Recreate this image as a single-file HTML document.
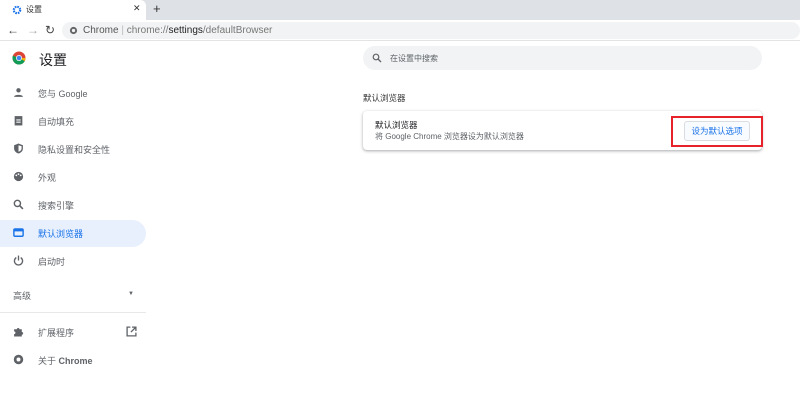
<!DOCTYPE html>
<html><head><meta charset="utf-8"><style>
*{margin:0;padding:0;box-sizing:border-box}
body{width:800px;height:404px;background:#fff;font-family:"Liberation Sans","Noto Sans CJK SC",sans-serif;position:relative;overflow:hidden;color:#202124}
.abs{position:absolute}
.tabbar{left:0;top:0;width:800px;height:20px;background:#dee1e6}
.tab{left:0;top:0;width:146px;height:20px;background:#fff;border-radius:0 6px 0 0}
.toolbar{left:0;top:20px;width:800px;height:21px;background:#fff;border-bottom:1px solid #e3e3e3}
.omni{left:62px;top:22px;width:738px;height:17px;background:#f1f3f4;border-radius:9px}
.nav{left:0;width:146px;height:28px;font-size:9px;color:#5f6368}
.nav span{position:absolute;left:38px;top:8px}
.nav svg{position:absolute;left:13px;top:8px}
</style></head><body>
<div class="abs tabbar"></div>
<div class="abs tab"></div>
<svg class="abs" style="left:12px;top:5px" width="10" height="10" viewBox="0 0 10 10"><circle cx="5" cy="5" r="3.2" fill="none" stroke="#1a73e8" stroke-width="2.2" stroke-dasharray="1.6 0.9"/><circle cx="5" cy="5" r="1" fill="#fff"/></svg>
<div class="abs" style="left:26px;top:4px;font-size:8px;color:#333">设置</div>
<div class="abs" style="left:133px;top:3px;font-size:9px;color:#333">✕</div>
<div class="abs" style="left:153px;top:1px;font-size:13px;color:#333">+</div>
<div class="abs toolbar"></div>
<div class="abs" style="left:7px;top:23px;font-size:12px;color:#444">←</div>
<div class="abs" style="left:27px;top:23px;font-size:12px;color:#aaa">→</div>
<div class="abs" style="left:45px;top:23px;font-size:12px;color:#444">↻</div>
<div class="abs omni"></div>
<svg class="abs" style="left:69px;top:26px" width="9" height="9" viewBox="0 0 10 10"><circle cx="5" cy="5" r="4" fill="#666"/><circle cx="5" cy="5" r="1.8" fill="#f1f3f4"/></svg>
<div class="abs" style="left:83px;top:25px;font-size:10px;color:#555">Chrome <span style="color:#bbb">|</span> <span style="color:#777">chrome://</span><span style="color:#222">settings</span><span style="color:#777">/defaultBrowser</span></div>

<svg class="abs" style="left:12px;top:51px" width="14" height="14" viewBox="0 0 14 14"><circle cx="7" cy="7" r="6.5" fill="#db4437"/><path d="M7 7 L1.4 10.2 A6.5 6.5 0 0 1 0.9 4.6Z" fill="#0f9d58"/><path d="M7 7 L12.8 10 A6.5 6.5 0 0 1 1.4 10.2Z" fill="#0f9d58"/><path d="M7 7 L13.5 7 A6.5 6.5 0 0 1 12.8 10Z" fill="#f4b400"/><circle cx="7" cy="7" r="3" fill="#fff"/><circle cx="7" cy="7" r="2.3" fill="#4285f4"/></svg>
<div class="abs" style="left:39px;top:50px;font-size:14px;color:#202124">设置</div>

<div class="abs nav" style="top:79px"><svg width="11" height="11" viewBox="0 0 10 10"><circle cx="5" cy="3" r="2" fill="#5f6368"/><path d="M1 9c0-2.5 8-2.5 8 0z" fill="#5f6368"/></svg><span>您与 Google</span></div>
<div class="abs nav" style="top:107px"><svg width="11" height="11" viewBox="0 0 10 10"><rect x="1.5" y="1" width="7" height="8.5" fill="#5f6368"/><rect x="3" y="4" width="4" height="1" fill="#fff"/><rect x="3" y="6" width="4" height="1" fill="#fff"/></svg><span>自动填充</span></div>
<div class="abs nav" style="top:135px"><svg width="11" height="11" viewBox="0 0 10 10"><path d="M5 0.5L9 2v3c0 2.5-2 4-4 4.5C3 9 1 7.5 1 5V2z" fill="#5f6368"/><path d="M5 2v6c1.5-.5 2.8-1.5 2.8-3.2V2.9z" fill="#fff"/></svg><span>隐私设置和安全性</span></div>
<div class="abs nav" style="top:163px"><svg width="11" height="11" viewBox="0 0 10 10"><circle cx="5" cy="5" r="4.2" fill="#5f6368"/><circle cx="3" cy="4" r=".8" fill="#fff"/><circle cx="5" cy="2.8" r=".8" fill="#fff"/><circle cx="7" cy="4" r=".8" fill="#fff"/></svg><span>外观</span></div>
<div class="abs nav" style="top:191px"><svg width="11" height="11" viewBox="0 0 10 10"><circle cx="4" cy="4" r="2.8" fill="none" stroke="#5f6368" stroke-width="1.3"/><path d="M6 6l3 3" stroke="#5f6368" stroke-width="1.5"/></svg><span>搜索引擎</span></div>
<div class="abs" style="left:0;top:220px;width:146px;height:27px;background:#e8f0fe;border-radius:0 14px 14px 0"></div>
<div class="abs nav" style="top:219px;color:#1a73e8"><svg width="11" height="11" viewBox="0 0 10 10"><rect x="0.8" y="1.8" width="8.4" height="6.6" rx="1" fill="none" stroke="#1a73e8" stroke-width="1.3"/><rect x="0.8" y="1.8" width="8.4" height="2.2" fill="#1a73e8"/></svg><span>默认浏览器</span></div>
<div class="abs nav" style="top:247px"><svg width="11" height="11" viewBox="0 0 10 10"><path d="M3 2.3A3.7 3.7 0 1 0 7 2.3" fill="none" stroke="#5f6368" stroke-width="1.2"/><path d="M5 0.5v4.5" stroke="#5f6368" stroke-width="1.2"/></svg><span>启动时</span></div>
<div class="abs" style="left:13px;top:289px;font-size:9px;color:#5f6368">高级</div>
<div class="abs" style="left:128px;top:291px;font-size:6px;color:#5f6368">▼</div>
<div class="abs" style="left:0;top:312px;width:146px;height:1px;background:#e8e8e8"></div>
<div class="abs nav" style="top:318px"><svg width="11" height="11" viewBox="0 0 10 10"><path d="M1 3h2.5a1.2 1.2 0 1 1 2.4 0H8v2.5a1.2 1.2 0 1 1 0 2.4V9.5H1V7.3a1.2 1.2 0 1 0 0-2.4z" fill="#5f6368"/></svg><span>扩展程序</span></div>
<svg class="abs" style="left:126px;top:326px" width="11" height="11" viewBox="0 0 10 10"><path d="M4 1H1v8h8V6" fill="none" stroke="#5f6368" stroke-width="1.2"/><path d="M5.5 1H9v3.5M9 1L4.5 5.5" fill="none" stroke="#5f6368" stroke-width="1.2"/></svg>
<div class="abs nav" style="top:346px"><svg width="11" height="11" viewBox="0 0 10 10"><circle cx="5" cy="5" r="4.3" fill="#5f6368"/><circle cx="5" cy="5" r="1.8" fill="#fff"/></svg><span>关于 <b style="font-weight:bold">Chrome</b></span></div>

<div class="abs" style="left:363px;top:46px;width:399px;height:24px;background:#f1f3f4;border-radius:12px"></div>
<svg class="abs" style="left:372px;top:53px" width="10" height="10" viewBox="0 0 10 10"><circle cx="4" cy="4" r="2.8" fill="none" stroke="#5f6368" stroke-width="1.2"/><path d="M6 6l3 3" stroke="#5f6368" stroke-width="1.3"/></svg>
<div class="abs" style="left:390px;top:53px;font-size:8px;color:#5f6368">在设置中搜索</div>
<div class="abs" style="left:363px;top:92px;font-size:8.5px;color:#333">默认浏览器</div>
<div class="abs" style="left:363px;top:111px;width:399px;height:39px;background:#fff;border-radius:4px;box-shadow:0 1px 2px rgba(60,64,67,.3),0 1px 3px 1px rgba(60,64,67,.12)"></div>
<div class="abs" style="left:375px;top:119px;font-size:8.5px;color:#202124">默认浏览器</div>
<div class="abs" style="left:375px;top:131px;font-size:8px;color:#5f6368">将 Google Chrome 浏览器设为默认浏览器</div>
<div class="abs" style="left:684px;top:121px;width:66px;height:20px;border:1px solid #dadce0;border-radius:3px;background:#f8fbff;font-size:8.5px;color:#1a73e8;text-align:center;line-height:18px">设为默认选项</div>
<div class="abs" style="left:671px;top:116px;width:92px;height:31px;border:2px solid #e8222a"></div>
</body></html>
